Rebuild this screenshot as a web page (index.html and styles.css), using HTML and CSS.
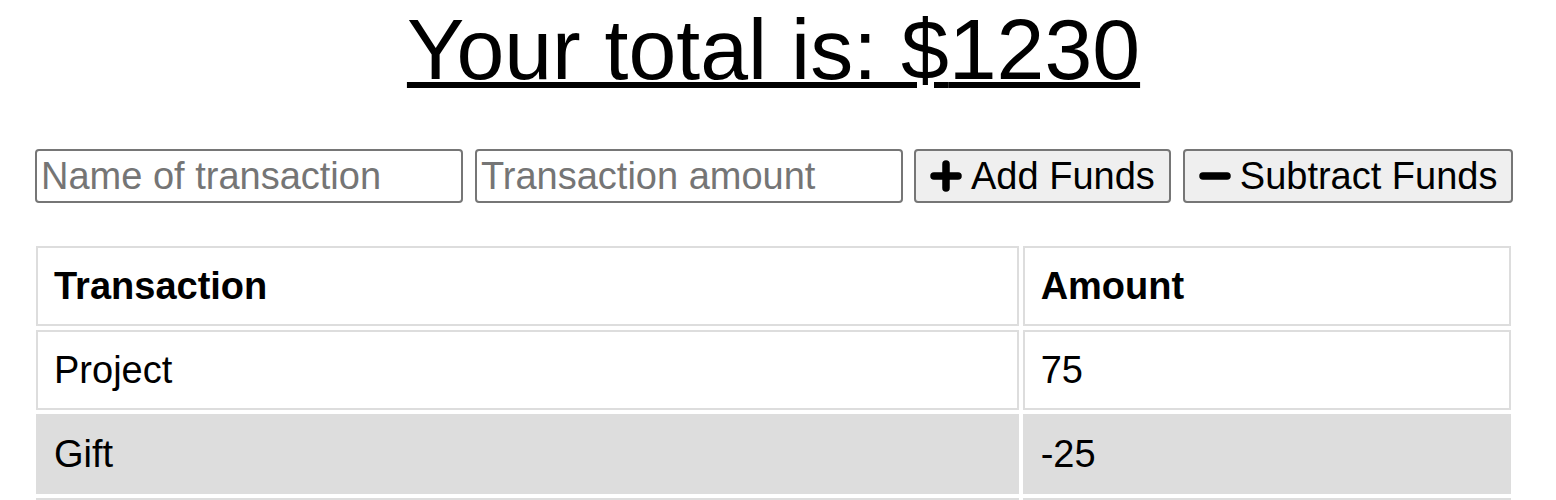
FILE: index.html
```html
<!DOCTYPE html>
<html lang="en">
<head>
<meta charset="utf-8">
<title>Budget Tracker</title>
<link rel="stylesheet" href="styles.css">
</head>
<body>
<div class="container">
  <h1 class="total">Your total is: $<span class="total-amount">1230</span></h1>
  <form class="controls">
    <input class="field" type="text" placeholder="Name of transaction">
    <input class="field" type="number" placeholder="Transaction amount">
    <button class="btn btn-add" type="button">
      <svg class="icon" viewBox="0 0 32 32" aria-hidden="true"><path d="M16 4V28M4 16H28" stroke="#000" stroke-width="7.5" stroke-linecap="round" fill="none"/></svg>
      <span>Add Funds</span>
    </button>
    <button class="btn btn-sub" type="button">
      <svg class="icon" viewBox="0 0 32 32" aria-hidden="true"><path d="M4 16H28" stroke="#000" stroke-width="7.5" stroke-linecap="round" fill="none"/></svg>
      <span>Subtract Funds</span>
    </button>
  </form>
  <table class="tx-table">
    <thead>
      <tr><th class="col-name">Transaction</th><th class="col-amount">Amount</th></tr>
    </thead>
    <tbody>
      <tr><td>Project</td><td>75</td></tr>
      <tr class="alt"><td>Gift</td><td>-25</td></tr>
      <tr class="more"><td></td><td></td></tr>
    </tbody>
  </table>
</div>
</body>
</html>
```
FILE: styles.css
```css
html, body {
  margin: 0;
  padding: 0;
  background: #fff;
}
body {
  font-family: "Liberation Sans", Arial, Helvetica, sans-serif;
  color: #000;
}
.container {
  padding: 0 41px 0 32px;
}
.total {
  margin: 0;
  font-size: 86px;
  font-weight: normal;
  text-align: center;
  text-decoration: underline;
  text-decoration-thickness: 6px;
  line-height: 98px;
}
.controls {
  display: flex;
  align-items: center;
  gap: 12px;
  margin: 51px 0 0 3px;
}
.field {
  box-sizing: border-box;
  width: 428px;
  height: 54px;
  padding: 2px 4px;
  border: 2px solid #767676;
  border-radius: 4px;
  font-family: "Liberation Sans", Arial, sans-serif;
  font-size: 38px;
  color: #000;
  background: #fff;
  margin: 0;
  -moz-appearance: textfield;
}
.field::-webkit-outer-spin-button,
.field::-webkit-inner-spin-button {
  -webkit-appearance: none;
  margin: 0;
}
.field::placeholder {
  color: #757575;
}
.btn {
  box-sizing: border-box;
  display: flex;
  align-items: center;
  gap: 9px;
  height: 54px;
  padding: 0 14px 0 14px;
  margin: 0;
  border: 2px solid #767676;
  border-radius: 4px;
  background: #efefef;
  font-family: "Liberation Sans", Arial, sans-serif;
  font-size: 38px;
  color: #000;
}
.btn-add {
  margin-left: -1px;
}
.icon {
  width: 32px;
  height: 32px;
  flex: none;
}
.tx-table {
  width: 100%;
  margin-top: 39px;
  border-collapse: separate;
  border-spacing: 4px;
  font-size: 38px;
}
.tx-table th,
.tx-table td {
  border: 2px solid #ddd;
  padding: 16px 16px;
  text-align: left;
  line-height: 44px;
}
.tx-table tr.more td {
  height: 44px;
}
.tx-table th {
  font-weight: bold;
}
.col-name {
  width: 66.8%;
}
.tx-table tr.alt td {
  background: #ddd;
}
```
